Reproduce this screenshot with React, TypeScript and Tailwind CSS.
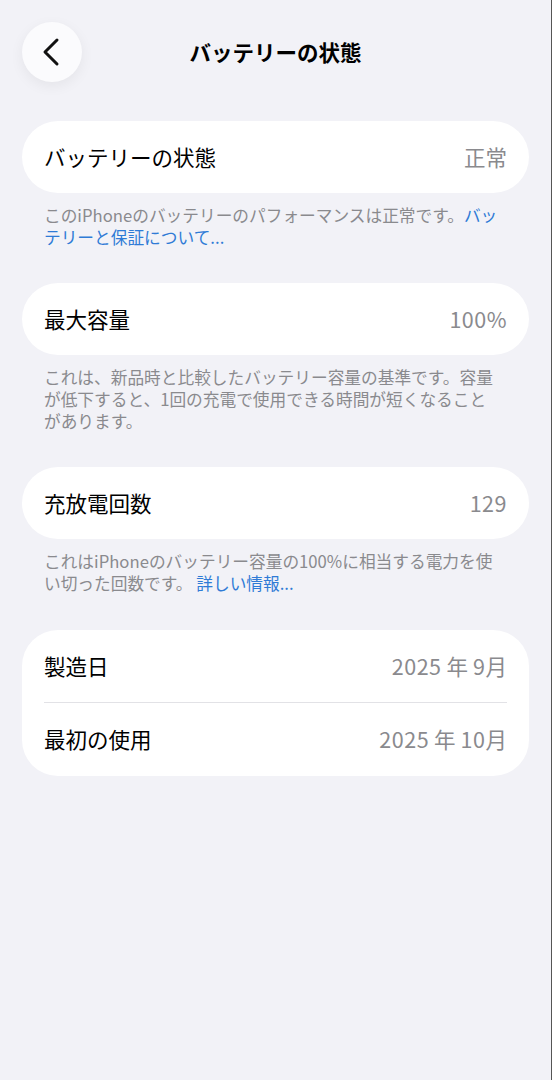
import React from 'react';

const font = { fontFamily: '"Noto Sans CJK JP", "Noto Sans", sans-serif' };

const Row: React.FC<{ label: string; value: React.ReactNode }> = ({ label, value }) => (
  <div className="flex h-[72px] items-center justify-between px-[22px]">
    <span className="text-[21.5px] text-black">{label}</span>
    <span className="text-[21.5px] text-[#8a8a8e]">{value}</span>
  </div>
);

const Note: React.FC<{ children: React.ReactNode }> = ({ children }) => (
  <p className="mt-[11px] px-[22px] text-[16.7px] leading-[22px] text-[#8a8a8e] whitespace-nowrap">{children}</p>
);

const Link: React.FC<{ children: React.ReactNode }> = ({ children }) => (
  <span className="text-[#2f7bd6]">{children}</span>
);

// iOS puts a little air between digits and kanji
const Ym: React.FC<{ y: string; m: string }> = ({ y, m }) => (
  <>
    <span className="tracking-[0.5px]">{y}</span>
    <span className="mx-[5px]">年</span>
    <span className="tracking-[0.5px]">{m}</span>月
  </>
);

const App: React.FC = () => {
  return (
    <div className="min-h-[1080px] w-full bg-[#f2f2f7] border-r border-[#555]" style={font}>
      {/* Header */}
      <header className="relative flex h-[104px] items-start px-[22px] pt-[22px]">
        <button className="flex h-[60px] w-[60px] items-center justify-center rounded-full bg-[#fbfbfd] shadow-[0_4px_14px_rgba(0,0,0,0.06)]">
          <svg width="20" height="30" viewBox="0 0 20 30" fill="none">
            <path d="M15 3 L3 15 L15 27" stroke="#111" strokeWidth="3" strokeLinecap="round" strokeLinejoin="round" />
          </svg>
        </button>
        <h1 className="absolute left-0 right-0 top-[36px] text-center text-[21.5px] font-bold leading-[32px] text-black">バッテリーの状態</h1>
      </header>

      <main className="flex flex-col px-[22px] pt-[17px]">
        <div className="rounded-full bg-white">
          <Row label="バッテリーの状態" value="正常" />
        </div>
        <Note>
          このiPhoneのバッテリーのパフォーマンスは正常です。<Link>バッ</Link>
          <br />
          <Link>テリーと保証について...</Link>
        </Note>

        <div className="mt-[35px] rounded-full bg-white">
          <Row label="最大容量" value={<span className="tracking-[0.5px]">100%</span>} />
        </div>
        <Note>
          これは、新品時と比較したバッテリー容量の基準です。容量
          <br />
          が低下すると、1回の充電で使用できる時間が短くなること
          <br />
          があります。
        </Note>

        <div className="mt-[35px] rounded-full bg-white">
          <Row label="充放電回数" value={<span className="tracking-[0.5px]">129</span>} />
        </div>
        <Note>
          これはiPhoneのバッテリー容量の100%に相当する電力を使
          <br />
          い切った回数です。 <Link>詳しい情報...</Link>
        </Note>

        <div className="mt-[36px] rounded-[36px] bg-white">
          <Row label="製造日" value={<Ym y="2025" m="9" />} />
          <div className="mx-[22px] h-px bg-[#e2e2e6]" />
          <div className="flex h-[73px] items-center justify-between px-[22px]">
            <span className="text-[21.5px] text-black">最初の使用</span>
            <span className="text-[21.5px] text-[#8a8a8e]"><Ym y="2025" m="10" /></span>
          </div>
        </div>
      </main>
    </div>
  );
};

export default App;
